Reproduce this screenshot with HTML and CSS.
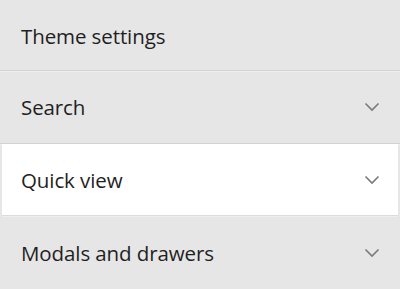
FILE: index.html
```html
<!DOCTYPE html>
<html lang="en">
<head>
<meta charset="utf-8">
<title>Theme settings</title>
<link rel="stylesheet" href="styles.css">
</head>
<body>
<div class="panel">
  <div class="row header"><span class="label">Theme settings</span></div>
  <div class="row section"><span class="label">Search</span>
    <svg class="chev" width="16" height="10" viewBox="0 0 16 10"><path d="M1.5 1.5 L8 8 L14.5 1.5" fill="none" stroke="#7a7a7a" stroke-width="1.6"/></svg>
  </div>
  <div class="row section active"><span class="label">Quick view</span>
    <svg class="chev" width="16" height="10" viewBox="0 0 16 10"><path d="M1.5 1.5 L8 8 L14.5 1.5" fill="none" stroke="#7a7a7a" stroke-width="1.6"/></svg>
  </div>
  <div class="row section last"><span class="label">Modals and drawers</span>
    <svg class="chev" width="16" height="10" viewBox="0 0 16 10"><path d="M1.5 1.5 L8 8 L14.5 1.5" fill="none" stroke="#7a7a7a" stroke-width="1.6"/></svg>
  </div>
</div>
</body>
</html>
```

FILE: styles.css
```css
html, body {
  margin: 0;
  padding: 0;
  background: #e6e6e6;
}
.panel {
  width: 400px;
  height: 289px;
  background: #e6e6e6;
  font-family: "Open Sans", "Noto Sans", sans-serif;
  color: #1f1f1f;
  display: flex;
  flex-direction: column;
  overflow: hidden;
}
.row {
  display: flex;
  align-items: center;
  justify-content: space-between;
  padding: 0 20px 0 21px;
  border-bottom: 1px solid #d3d3d3;
  box-shadow: 0 1px 0 #eeeeee;
  box-sizing: border-box;
}
.header {
  height: 71px;
  padding-top: 1px;
}
.section {
  height: 73px;
}
.active {
  height: 72px;
  background: #ffffff;
  margin: 0 2px;
  padding: 0 18px 0 19px;
  border-bottom-color: #dcdcdc;
}
.last {
  flex: 1;
  border-bottom: none;
  box-shadow: none;
}
.label {
  font-size: 20.5px;
  font-weight: 500;
  letter-spacing: -0.1px;
}
.chev {
  display: block;
  margin-right: 0;
}
```
